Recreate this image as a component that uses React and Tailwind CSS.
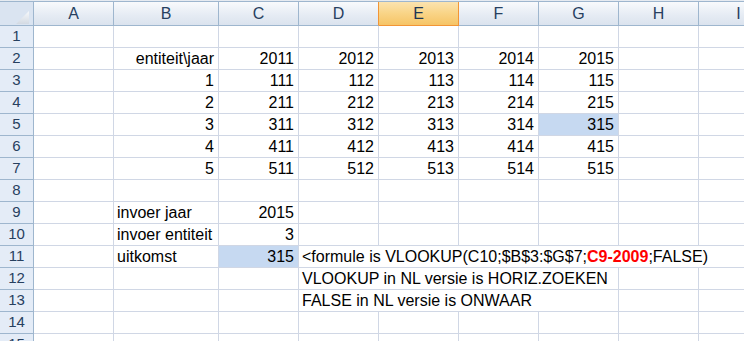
import React from "react";

const COLS = [
  { k: "A", w: 80 },
  { k: "B", w: 105 },
  { k: "C", w: 80 },
  { k: "D", w: 80 },
  { k: "E", w: 80 },
  { k: "F", w: 80 },
  { k: "G", w: 80 },
  { k: "H", w: 80 },
  { k: "I", w: 80 },
];

const ACTIVE_COL = "E";

const r = (t) => ({ t, a: "r" });
const l = (t) => ({ t, a: "l" });

const Formula = () => (
  <>
    {"<formule is VLOOKUP(C10;$B$3:$G$7;"}
    <span className="font-bold text-[#ff0000]">C9-2009</span>
    {";FALSE)"}
  </>
);

const DATA = {
  2: { B: r("entiteit\\jaar"), C: r("2011"), D: r("2012"), E: r("2013"), F: r("2014"), G: r("2015") },
  3: { B: r("1"), C: r("111"), D: r("112"), E: r("113"), F: r("114"), G: r("115") },
  4: { B: r("2"), C: r("211"), D: r("212"), E: r("213"), F: r("214"), G: r("215") },
  5: { B: r("3"), C: r("311"), D: r("312"), E: r("313"), F: r("314"), G: { t: "315", a: "r", hl: true } },
  6: { B: r("4"), C: r("411"), D: r("412"), E: r("413"), F: r("414"), G: r("415") },
  7: { B: r("5"), C: r("511"), D: r("512"), E: r("513"), F: r("514"), G: r("515") },
  9: { B: l("invoer jaar"), C: r("2015") },
  10: { B: l("invoer entiteit"), C: r("3") },
  11: { B: l("uitkomst"), C: { t: "315", a: "r", hl: true }, D: { t: <Formula />, a: "l", span: 6 } },
  12: { D: { t: "VLOOKUP in NL versie is HORIZ.ZOEKEN", a: "l", span: 4 } },
  13: { D: { t: "FALSE in NL versie is ONWAAR", a: "l", span: 4 } },
};

function CornerCell() {
  return (
    <div className="relative h-[24px] w-[34px] shrink-0 border-b border-r border-[#9eb6ce] bg-[#dae4f1]">
      <svg className="absolute left-[15px] top-[8px]" width="15" height="15" viewBox="0 0 15 15">
        <defs>
          <linearGradient id="cornerTri" x1="0" y1="0" x2="0" y2="1">
            <stop offset="0" stopColor="#f7f9fb" />
            <stop offset="1" stopColor="#d3dae3" />
          </linearGradient>
        </defs>
        <polygon points="1,14 14,14 14,1" fill="url(#cornerTri)" />
      </svg>
    </div>
  );
}

function ColumnHeader({ col, nextActive }) {
  const active = col.k === ACTIVE_COL;
  return (
    <div
      style={{ width: col.w }}
      className={
        "flex h-[24px] shrink-0 items-center justify-center border-b border-r text-[16px] " +
        (active
          ? "border-[#f29536] bg-[linear-gradient(to_bottom,#fbe3b0,#f9d486_50%,#f6c466)] text-[#1f3554]"
          : (nextActive ? "border-r-[#f29536] " : "") +
            "border-b-[#9eb6ce] border-r-[#9eb6ce] bg-[linear-gradient(to_bottom,#f8fafc,#e6ecf4_55%,#dbe3ee)] text-[#27405f]")
      }
    >
      {col.k}
    </div>
  );
}

function RowHeader({ n }) {
  return (
    <div className="flex h-[22px] w-[34px] shrink-0 items-center justify-center border-b border-r border-[#9eb6ce] bg-[#e4ecf7] text-[15px] text-[#27405f]">
      {n}
    </div>
  );
}

function DataRow({ n }) {
  const row = DATA[n] || {};
  const cells = [];
  for (let i = 0; i < COLS.length; i++) {
    const col = COLS[i];
    const cell = row[col.k];
    const span = cell && cell.span ? cell.span : 1;
    let w = 0;
    for (let j = i; j < i + span && j < COLS.length; j++) w += COLS[j].w;
    cells.push(
      <div
        key={col.k}
        style={{ width: w }}
        className="flex h-[22px] shrink-0 border-b border-r border-[#d0d7e5]"
      >
        <div
          className={
            "flex h-full w-full items-center whitespace-nowrap text-[16px] leading-[18px] text-black " +
            (cell && cell.a === "r" ? "justify-end pr-[4px] " : "justify-start pl-[3px] ") +
            (cell && cell.hl ? "bg-[#c6d9f1]" : "")
          }
        >
          {cell ? cell.t : null}
        </div>
      </div>
    );
    i += span - 1;
  }
  return (
    <div className="flex">
      <RowHeader n={n} />
      {cells}
    </div>
  );
}

export default function App() {
  const rows = Array.from({ length: 15 }, (_, i) => i + 1);
  return (
    <div className="h-[341px] w-[744px] overflow-hidden bg-white font-['Liberation_Sans',Arial,sans-serif]">
      <div className="h-[1px] w-full bg-[#e6ebf1]" />
      <div className="h-[1px] w-full bg-[#9eb6ce]" />
      <div className="flex">
        <CornerCell />
        {COLS.map((c, i) => (
          <ColumnHeader key={c.k} col={c} nextActive={COLS[i + 1] && COLS[i + 1].k === ACTIVE_COL} />
        ))}
      </div>
      {rows.map((n) => (
        <DataRow key={n} n={n} />
      ))}
    </div>
  );
}
